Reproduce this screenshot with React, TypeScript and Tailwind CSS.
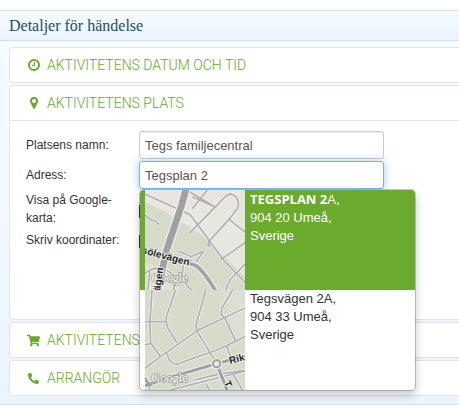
import { useState } from 'react';
import type { ReactNode } from 'react';
import { FaPhoneAlt, FaShoppingCart } from 'react-icons/fa';

function ClockIcon() {
  return (
    <svg viewBox="0 0 12 12" className="size-3" aria-hidden="true">
      <circle cx="6" cy="6" r="5" fill="none" stroke="currentColor" strokeWidth="2" />
      <path d="M6.5 3v3.5H4" fill="none" stroke="currentColor" />
    </svg>
  );
}

function PinIcon() {
  return (
    <svg viewBox="0 0 8 12" className="h-3 w-2" aria-hidden="true">
      <path
        fill="currentColor"
        fillRule="evenodd"
        d="M4 0a4 4 0 0 1 4 4c0 .8-.2 1.400-.5 2L4.700 11.600a.8.8 0 0 1-1.400 0L.5 6C.2 5.400 0 4.800 0 4a4 4 0 0 1 4-4zm0 2a2 2 0 1 0 0 4 2 2 0 0 0 0-4z"
      />
    </svg>
  );
}

const TEGSPLAN_ROADS =
  'M40 40 L162 95 L181 105 L215 150 L240 185 L285 245 L350 312 M170 30 L256 82 L187 50 M187 86 L232 30 ' +
  'M178 160 L245 92 L288 48 Q305 35 319 52 Q330 66 322 86 L297 118 L235 186 L240 200 L229 193 ' +
  'M297 118 L350 160 M350 185 L272 239 M345 252 L300 300 L285 335 M40 100 Q62 123 76 123 L88 134 ' +
  'M148 214 L184 230 L219 214 M176 238 L196 250 L219 216 M160 252 L156 286 Q165 316 190 335 ' +
  'M90 262 L65 268 L45 280 M60 275 L52 335 M100 262 L138 292 L130 335';

const TEGSVAGEN_ROADS =
  'M45 110 L108 110 M66 15 L60 110 L62 175 L92 215 M138 12 L110 92 Q106 110 114 130 L141 174 ' +
  'M228 12 L199 116 Q197 130 203 142 L260 236 M310 12 L275 70 L274 90 L284 98 L316 166 ' +
  'M45 180 L62 175 M40 253 L92 215 L203 136 L284 98 L350 66 M112 205 Q116 238 142 238 L190 220 L243 202 L290 182 L350 152 ' +
  'M290 182 L302 215 M195 285 L262 268 L350 255 M228 296 L240 320 M310 268 L340 320 M120 315 L345 258 M45 270 L60 315';

function Roads({ d }: { d: string }) {
  return (
    <g fill="none" strokeLinejoin="round">
      <path d={d} stroke="#f0efec" strokeWidth="10" />
      <path d={d} stroke="#b0b0b3" strokeWidth="5" />
    </g>
  );
}

function GoogleMark({ y }: { y: number }) {
  return (
    <text
      x="64"
      y={y}
      fontSize="37"
      fill="#fbfbf9"
      stroke="#9a9a95"
      strokeWidth="4"
      paintOrder="stroke"
      className="font-['Liberation_Serif',serif]"
    >
      Google
    </text>
  );
}

function TegsplanMap() {
  return (
    <svg viewBox="45 30 300 300" className="size-[100px] shrink-0" role="img" aria-label="Karta Tegsplan">
      <rect x="45" y="30" width="300" height="300" fill="#e7e6df" />
      <path d="M45 65 L105 95 L215 165 L345 290 V330 H45z" fill="#d5dac9" />
      <path d="M45 245 L100 265 L150 330 H45z" fill="#e0e1d7" />
      <Roads d={TEGSPLAN_ROADS} />
      <g fill="none">
        <path d="M170 20 L155 75 L110 210 L90 300 L82 340" stroke="#f0efec" strokeWidth="27" />
        <path d="M40 210 L110 232 L196 256 Q220 270 258 335" stroke="#f0efec" strokeWidth="18" />
        <path d="M40 210 L110 232 L196 256 Q220 270 258 335" stroke="#a3a3a5" strokeWidth="11" />
        <path d="M170 20 L155 75 L110 210 L90 300 L82 340" stroke="#a0a0a2" strokeWidth="20" />
      </g>
      <GoogleMark y={306} />
      <g
        fontSize="30"
        fontWeight="bold"
        fill="#222"
        stroke="#f4f3f0"
        strokeWidth="5"
        paintOrder="stroke"
        className="font-['Liberation_Sans',sans-serif]"
      >
        <text transform="translate(34 219) rotate(15)">sölevägen</text>
        <text transform="translate(88 350) rotate(-82)">vägen</text>
      </g>
    </svg>
  );
}

function TegsvagenMap() {
  return (
    <svg viewBox="45 15 300 300" className="size-[100px] shrink-0" role="img" aria-label="Karta Tegsvägen">
      <rect x="45" y="15" width="300" height="300" fill="#d6dbca" />
      <path d="M275 15 H345 V165 L316 166z" fill="#dcdfd2" />
      <Roads d={TEGSVAGEN_ROADS} />
      <g fill="none">
        <path d="M35 305 L110 280 L260 236 L350 212 M260 236 L295 325 M40 275 L62 304" stroke="#f0efec" strokeWidth="15" />
        <path d="M35 305 L110 280 L260 236 L350 212 M260 236 L295 325 M40 275 L62 304" stroke="#a0a0a2" strokeWidth="9" />
        <circle cx="260" cy="236" r="12" fill="#e6e7df" stroke="#f4f3f0" strokeWidth="10" />
        <circle cx="260" cy="236" r="11" fill="#e6e7df" stroke="#a0a0a2" strokeWidth="6" />
      </g>
      <GoogleMark y={291} />
      <g
        fontSize="30"
        fontWeight="bold"
        fill="#222"
        stroke="#f4f3f0"
        strokeWidth="5"
        paintOrder="stroke"
        className="font-['Liberation_Sans',sans-serif]"
      >
        <text transform="translate(300 237) rotate(-14)">Riks</text>
        <text transform="translate(281 292) rotate(68)">T</text>
      </g>
    </svg>
  );
}

function Panel({ icon, title, children }: { icon: ReactNode; title: string; children?: ReactNode }) {
  return (
    <section className="rounded-l border border-r-0 border-[#e2e4e6] bg-white">
      <h3>
        <button type="button" className="flex h-[34px] w-full items-center gap-1.5 pl-4 text-left text-[#68a92c]">
          <span className="flex w-[15px] justify-center">{icon}</span>
          <span className="font-['Roboto',sans-serif] text-sm font-light">{title}</span>
        </button>
      </h3>
      {children}
    </section>
  );
}

const inputClass = 'block h-7 w-full rounded-[3px] border bg-white px-[5px] text-[13px] text-[#555] outline-none';
const checkClass = 'block size-[13px] appearance-none border border-[#1d4a5f] bg-white checked:bg-[#1d4a5f]';

export default function App() {
  const [name, setName] = useState('Tegs familjecentral');
  const [address, setAddress] = useState('Tegsplan 2');

  return (
    <main className="bg-white pt-2.5 font-['Liberation_Sans',Arial,sans-serif] text-xs leading-[18px] text-[#333]">
      <h2 className="border-y border-[#cee3ec] bg-linear-to-b from-[#f5fcff] to-[#ecf5fe] pl-[9px] font-['Liberation_Serif',serif] text-base leading-[29px] text-[#17506b]">
        Detaljer för händelse
      </h2>

      <div className="flex flex-col gap-0.5 border-b border-[#cee3ec] bg-linear-to-b from-[#f6fbfe] to-[#ebf5fe] pt-1.5 pb-2 pl-[9px]">
        <Panel icon={<ClockIcon />} title="AKTIVITETENS DATUM OCH TID" />

        <Panel icon={<PinIcon />} title="AKTIVITETENS PLATS">
          <form className="grid min-h-[199px] grid-cols-[113px_minmax(0,245px)] content-start gap-y-0.5 border-t border-[#e2e4e6] pt-2.5 pl-4">
            <label htmlFor="place" className="self-center">
              Platsens namn:
            </label>
            <input
              id="place"
              value={name}
              onChange={(e) => setName(e.target.value)}
              className={`${inputClass} border-[#ccc] shadow-[inset_0_1px_1px_rgba(0,0,0,0.08)]`}
            />

            <label htmlFor="address" className="self-center">
              Adress:
            </label>
            <div className="relative">
              <input
                id="address"
                value={address}
                onChange={(e) => setAddress(e.target.value)}
                className={`${inputClass} border-[#73b4ea] shadow-[0_0_8px_rgba(82,168,236,0.6)]`}
              />
              <ul className="absolute top-full left-0 z-10 w-[277px] overflow-hidden rounded-[5px] border border-black/20 bg-white bg-clip-padding text-[13px] leading-[18px] shadow-[0_5px_10px_rgba(0,0,0,0.2)]">
                <li>
                  <button type="button" className="flex w-full items-start bg-[#6aaa2d] pl-[5px] text-left text-white">
                    <TegsplanMap />
                    <span className="pl-[5px]">
                      <b className="font-['Open_Sans',sans-serif]">TEGSPLAN 2</b>A,
                      <br />
                      904 20 Umeå,
                      <br />
                      Sverige
                    </span>
                  </button>
                </li>
                <li>
                  <button type="button" className="flex w-full items-start pl-[5px] text-left">
                    <TegsvagenMap />
                    <span className="pl-[5px]">
                      Tegsvägen 2A,
                      <br />
                      904 33 Umeå,
                      <br />
                      Sverige
                    </span>
                  </button>
                </li>
              </ul>
            </div>

            <label htmlFor="show-map" className="pb-0.5">
              Visa på Google-
              <br />
              karta:
            </label>
            <input id="show-map" type="checkbox" className={`${checkClass} mt-3.5`} />

            <label htmlFor="coords">Skriv koordinater:</label>
            <input id="coords" type="checkbox" className={`${checkClass} mt-1`} />
          </form>
        </Panel>

        <Panel icon={<FaShoppingCart className="size-[13px]" />} title="AKTIVITETENS BILJETTER" />
        <Panel icon={<FaPhoneAlt className="size-[11px]" />} title="ARRANGÖR" />
      </div>
    </main>
  );
}
